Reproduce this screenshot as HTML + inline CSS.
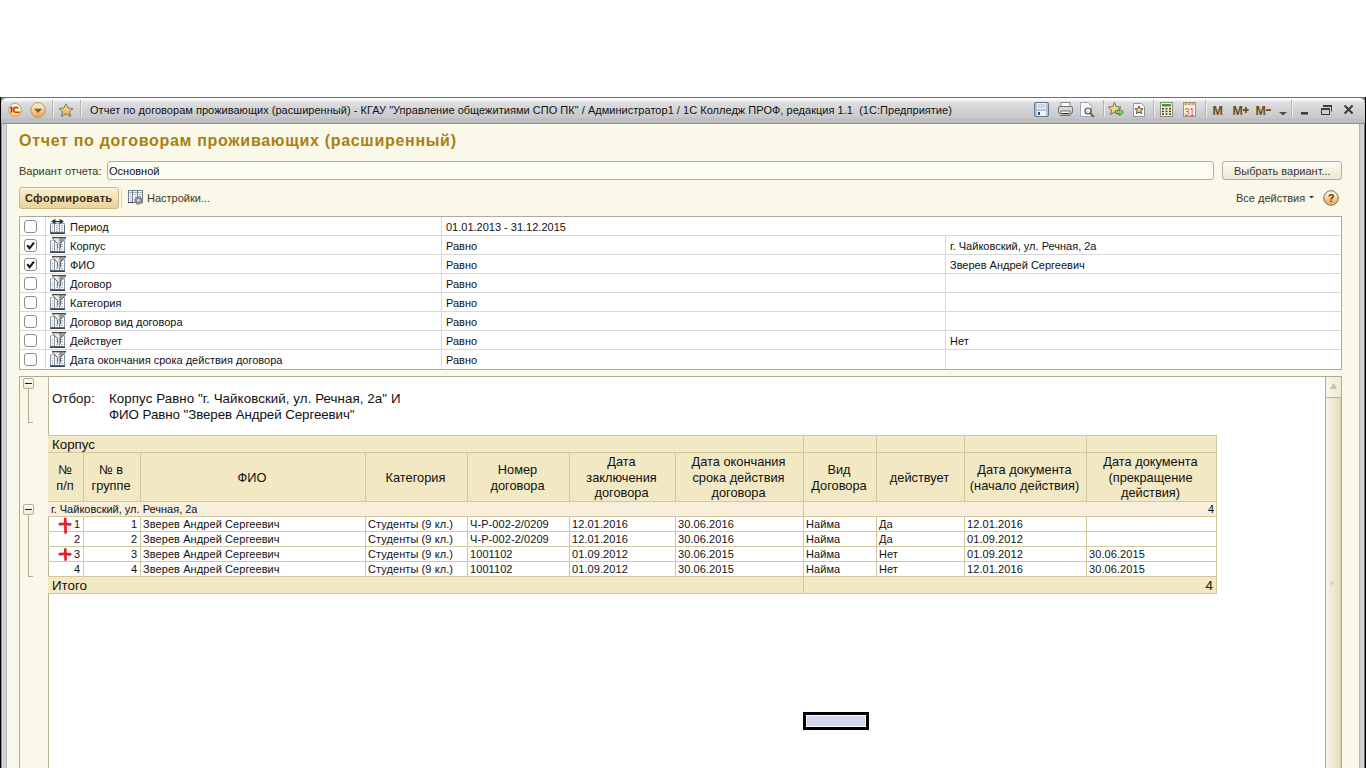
<!DOCTYPE html>
<html><head><meta charset="utf-8">
<style>
*{margin:0;padding:0;box-sizing:border-box}
html,body{width:1366px;height:768px;overflow:hidden;background:#fff;font-family:"Liberation Sans",sans-serif;font-size:11px;color:#111}
.a{position:absolute}
.t{position:absolute;white-space:nowrap;line-height:13px}
.c{position:absolute;white-space:nowrap;text-align:center}
.r{position:absolute;white-space:nowrap;text-align:right}
svg{position:absolute;overflow:visible}
</style></head><body>

<div class="a" style="left:0px;top:97px;width:1px;height:671px;background:#000"></div>
<div class="a" style="left:1365px;top:97px;width:1px;height:671px;background:#000"></div>
<div class="a" style="left:1px;top:97px;width:8px;height:8px;background:#7a7a7c"></div>
<div class="a" style="left:1357px;top:97px;width:8px;height:8px;background:#7a7a7c"></div>
<div class="a" style="left:1px;top:105px;width:6px;height:663px;background:linear-gradient(90deg,#8a8a8c 0px,#8a8a8c 1px,#dcdcdf 1px,#dcdcdf 2px,#d0d0d2 2px,#d0d0d2 5px,#bcbcbe 5px)"></div>
<div class="a" style="left:1359px;top:105px;width:6px;height:663px;background:linear-gradient(90deg,#b5b5b7 0px,#b5b5b7 1px,#d0d0d3 1px,#d0d0d3 4px,#dedee1 4px,#dedee1 5px,#6a6a6a 5px)"></div>
<div class="a" style="left:1px;top:97px;width:1364px;height:27px;border-top:1px solid #6f6f72;border-radius:6px 6px 0 0;border-bottom:1px solid #8f8f92;background:linear-gradient(#fdfdfd 0px,#fbfbfc 2px,#dfdfe1 4px,#d6d6d9 10px,#cbcbcf 17px,#c7c7cb 20px,#bdbec0 21px,#bbbcbe 25px)"></div>
<div class="a" style="left:7px;top:124px;width:1352px;height:644px;background:#faf8e8"></div>
<div class="t" style="left:90px;top:104px;color:#111;letter-spacing:0.03px">Отчет по договорам проживающих (расширенный) - КГАУ "Управление общежитиями СПО ПК" / Администратор1 / 1С Колледж ПРОФ, редакция 1.1&nbsp;&nbsp;(1С:Предприятие)</div>
<svg style="left:0;top:97px" width="100" height="27" viewBox="0 97 100 27">
 <defs>
  <linearGradient id="g1c" x1="0" y1="0" x2="0" y2="1"><stop offset="0" stop-color="#fff8dc"/><stop offset="0.55" stop-color="#fff0b8"/><stop offset="0.75" stop-color="#ffe36a"/><stop offset="1" stop-color="#ffd93c"/></linearGradient>
  <linearGradient id="gdd" x1="0" y1="0" x2="0" y2="1"><stop offset="0" stop-color="#fdf0dc"/><stop offset="0.55" stop-color="#f6c98a"/><stop offset="1" stop-color="#eaa24c"/></linearGradient>
  <linearGradient id="gst" x1="0" y1="0" x2="0" y2="1"><stop offset="0" stop-color="#fde3a0"/><stop offset="1" stop-color="#f5a83a"/></linearGradient>
 </defs>
 <circle cx="15" cy="109.8" r="6.4" fill="url(#g1c)" stroke="#b99c7c" stroke-width="1"/>
 <path d="M10.2 108.3 L11.5 107.5 L11.5 112.7" stroke="#c2330c" stroke-width="1.7" fill="none"/>
 <path d="M18.2 108.6 A2.5 2.5 0 1 0 16.2 112.3 L19.7 112.3" stroke="#c2330c" stroke-width="1.6" fill="none"/>
 <circle cx="38" cy="110" r="7.3" fill="url(#gdd)" stroke="#b78e5e" stroke-width="0.9"/>
 <path d="M34 108.8 L42 108.8 L38 113 Z" fill="#6d5c48"/>
 <rect x="52" y="100" width="1" height="17" fill="#b4b5b8"/><rect x="53" y="100" width="1" height="17" fill="#eeeef0"/>
 <path d="M66 103.8 L68.1 108 L72.9 108.6 L69.4 111.7 L70.5 116.4 L66 113.9 L61.5 116.4 L62.6 111.7 L59.1 108.6 L63.9 108 Z" fill="url(#gst)" stroke="#6f6a62" stroke-width="0.9" stroke-linejoin="round"/>
 <rect x="80" y="100" width="1" height="17" fill="#b4b5b8"/><rect x="81" y="100" width="1" height="17" fill="#eeeef0"/>
</svg>
<svg style="left:1025px;top:97px" width="341" height="27" viewBox="1025 97 341 27">
 <!-- floppy -->
 <rect x="1034.5" y="102.5" width="14" height="14" rx="1.2" fill="#b4c3d2" stroke="#63768a" stroke-width="1"/>
 <rect x="1037" y="103" width="9" height="6" fill="#e8f0f8"/>
 <rect x="1038" y="104.5" width="7" height="1" fill="#b0bcc8"/><rect x="1038" y="106.5" width="7" height="1" fill="#b0bcc8"/>
 <rect x="1037" y="111" width="9" height="5" fill="#eef2f6"/><rect x="1038" y="112" width="2" height="3" fill="#3a4a5a"/>
 <!-- printer -->
 <rect x="1061" y="102.5" width="9" height="5" fill="#fff" stroke="#8a8a8a" stroke-width="1"/>
 <rect x="1058.5" y="106.5" width="14" height="7" rx="1.5" fill="#d9d6d4" stroke="#7a7270" stroke-width="1"/>
 <rect x="1061" y="111" width="9" height="4.5" fill="#fff" stroke="#6a6a6a" stroke-width="1"/>
 <rect x="1062" y="113" width="7" height="1.3" fill="#222"/>
 <!-- preview -->
 <path d="M1080.5 102.5 L1088 102.5 L1091.5 106 L1091.5 116.5 L1080.5 116.5 Z" fill="#f6f8fb" stroke="#9aa8b8" stroke-width="1"/>
 <circle cx="1088" cy="111" r="3" fill="#dde8f5" stroke="#555" stroke-width="1.2"/>
 <path d="M1090.2 113.2 L1094 117" stroke="#8a5a2a" stroke-width="2"/>
 <rect x="1103" y="100" width="1" height="17" fill="#b4b5b8"/><rect x="1104" y="100" width="1" height="17" fill="#eeeef0"/>
 <!-- star + arrow -->
 <path d="M1114.5 102.5 L1116.3 106.6 L1120.8 107 L1117.4 110 L1118.4 114.4 L1114.5 112.1 L1110.6 114.4 L1111.6 110 L1108.2 107 L1112.7 106.6 Z" fill="#f5d48a" stroke="#6a6050" stroke-width="0.9" stroke-linejoin="round"/>
 <path d="M1115.5 110.5 L1119.5 110.5 L1119.5 108.3 L1123.8 112 L1119.5 115.7 L1119.5 113.5 L1115.5 113.5 Z" fill="#7ed05a" stroke="#3d8a2a" stroke-width="0.8"/>
 <!-- doc star -->
 <path d="M1133.5 103.5 L1141.5 103.5 L1144.5 106.5 L1144.5 116.5 L1133.5 116.5 Z" fill="#f6f8fb" stroke="#8a96a6" stroke-width="1"/>
 <path d="M1139 106 L1140.2 108.6 L1143 108.9 L1140.9 110.8 L1141.5 113.6 L1139 112.2 L1136.5 113.6 L1137.1 110.8 L1135 108.9 L1137.8 108.6 Z" fill="#f3d28a" stroke="#4a4030" stroke-width="0.9"/>
 <rect x="1153" y="100" width="1" height="17" fill="#b4b5b8"/><rect x="1154" y="100" width="1" height="17" fill="#eeeef0"/>
 <!-- calculator -->
 <rect x="1160.5" y="102.5" width="12" height="14" fill="#fbeed2" stroke="#8f8a80" stroke-width="1"/>
 <rect x="1162" y="104" width="9" height="2.5" fill="#3f9a3a"/>
 <g fill="#4a3e30"><rect x="1162" y="108" width="2" height="1.5"/><rect x="1165.5" y="108" width="2" height="1.5"/><rect x="1169" y="108" width="2" height="1.5"/><rect x="1162" y="110.7" width="2" height="1.5"/><rect x="1165.5" y="110.7" width="2" height="1.5"/><rect x="1169" y="110.7" width="2" height="1.5"/><rect x="1162" y="113.4" width="2" height="1.5"/><rect x="1165.5" y="113.4" width="2" height="1.5"/><rect x="1169" y="113.4" width="2" height="1.5"/></g>
 <!-- calendar -->
 <rect x="1183.5" y="102.5" width="12" height="14" fill="#fdf2dc" stroke="#9a948a" stroke-width="1"/>
 <rect x="1184" y="103" width="11" height="2.5" fill="#f1c988"/><rect x="1185.5" y="103.5" width="1" height="1" fill="#5a4a3a"/><rect x="1189" y="103.5" width="1" height="1" fill="#5a4a3a"/><rect x="1192.5" y="103.5" width="1" height="1" fill="#5a4a3a"/>
 <text x="1189.5" y="115.8" font-family="Liberation Sans" font-size="10.5" fill="#cc4a2a" text-anchor="middle" textLength="10" lengthAdjust="spacingAndGlyphs">31</text>
 <rect x="1205" y="100" width="1" height="17" fill="#b4b5b8"/><rect x="1206" y="100" width="1" height="17" fill="#eeeef0"/>
 <text x="1212.5" y="114.5" font-family="Liberation Sans" font-weight="bold" font-size="12.5" fill="#6e4b22">M</text>
 <text x="1232.5" y="114.5" font-family="Liberation Sans" font-weight="bold" font-size="12.5" fill="#6e4b22">M</text>
 <rect x="1243" y="109.2" width="5.6" height="1.8" fill="#6e4b22"/><rect x="1245" y="107" width="1.8" height="6" fill="#6e4b22"/>
 <text x="1255.5" y="114.5" font-family="Liberation Sans" font-weight="bold" font-size="12.5" fill="#6e4b22">M</text>
 <rect x="1266" y="109.2" width="5" height="1.8" fill="#6e4b22"/>
 <path d="M1279 112 L1287 112 L1283 115.6 Z" fill="#4a4a4a"/>
 <rect x="1291" y="100" width="1" height="17" fill="#b4b5b8"/><rect x="1292" y="100" width="1" height="17" fill="#eeeef0"/>
 <!-- minimize -->
 <rect x="1301" y="112" width="7" height="2.6" fill="#3c3c3c"/>
 <!-- restore -->
 <path d="M1323.5 105.5 L1331.5 105.5 L1331.5 111.5" fill="none" stroke="#3c3c3c" stroke-width="1"/>
 <rect x="1323" y="105" width="9" height="2" fill="#3c3c3c"/>
 <rect x="1321.5" y="108.5" width="8" height="6" fill="none" stroke="#3c3c3c" stroke-width="1"/>
 <rect x="1321" y="108" width="9" height="2" fill="#3c3c3c"/>
 <!-- close -->
 <path d="M1344.6 105.6 L1352.6 113.6 M1352.6 105.6 L1344.6 113.6" stroke="#3c3c3c" stroke-width="2.1"/>
</svg>

<div class="t" style="left:19px;top:132px;font-size:16px;font-weight:bold;color:#a97f14;line-height:18px;letter-spacing:0.7px">Отчет по договорам проживающих (расширенный)</div>
<div class="t" style="left:19px;top:165px;color:#3b3827">Вариант отчета:</div>
<div class="a" style="left:107px;top:161px;width:1107px;height:19px;border:1px solid #b3b09c;border-radius:3px;background:#fdfcf3"></div>
<div class="t" style="left:109px;top:165px;color:#111">Основной</div>
<div class="a" style="left:1222px;top:161px;width:120px;height:19px;border:1px solid #b3b09c;border-radius:3px;background:linear-gradient(#fdfcf6,#ebe8d6)"></div>
<div class="t" style="left:1234px;top:165px;color:#3b3827">Выбрать вариант...</div>
<div class="a" style="left:19px;top:187px;width:100px;height:22px;border:1px solid #cdb680;border-radius:3px;background:linear-gradient(#faefcf,#e8d39a);box-shadow:inset 0 1px 0 #fff8e4"></div>
<div class="t" style="left:25px;top:192px;font-weight:bold;color:#3a2c12;letter-spacing:0.3px">Сформировать</div>
<div class="a" style="left:121px;top:189px;width:1px;height:19px;background:#d8d3bd"></div>
<div class="t" style="left:147px;top:192px;color:#3b3827">Настройки...</div>
<div class="t" style="left:1236px;top:192px;color:#3b3827">Все действия</div>
<svg style="left:124px;top:186px" width="24" height="22" viewBox="124 186 24 22">
 <rect x="128" y="190" width="15" height="13" fill="#6f7d8c"/>
 <rect x="129" y="191" width="3" height="1.4" fill="#f2f5f8"/><rect x="133" y="191" width="4" height="1.4" fill="#f2f5f8"/><rect x="138" y="191" width="4" height="1.4" fill="#f2f5f8"/>
 <rect x="129" y="193" width="3" height="9" fill="#f4f7fa"/><rect x="133" y="193" width="4" height="9" fill="#f4f7fa"/><rect x="138" y="193" width="4" height="9" fill="#f4f7fa"/>
 <rect x="128" y="202" width="5" height="1" fill="#34414f"/>
 <g fill="#9aa6b2"><rect x="130" y="194" width="1" height="1"/><rect x="130" y="196" width="1" height="1"/><rect x="130" y="198" width="1" height="1"/><rect x="130" y="200" width="1" height="1"/><rect x="134" y="194" width="2" height="1"/><rect x="139" y="194" width="2" height="1"/></g>
 <circle cx="138.5" cy="200.3" r="3.6" fill="#8c8c8c" stroke="#7a7a7a" stroke-width="1.8" stroke-dasharray="1.2 1"/>
 <circle cx="138.5" cy="200.3" r="3" fill="#8e8e8e"/>
 <circle cx="138.5" cy="200.3" r="1.2" fill="#e8e8e8"/>
</svg>
<svg style="left:1300px;top:188px" width="40" height="20" viewBox="1300 188 40 20">
 <path d="M1309 196 L1314 196 L1311.5 198.6 Z" fill="#3b3827"/>
 <defs><linearGradient id="ghelp" x1="0" y1="0" x2="0" y2="1"><stop offset="0" stop-color="#fdf6ec"/><stop offset="0.4" stop-color="#f8dcb2"/><stop offset="0.75" stop-color="#f1b76a"/><stop offset="1" stop-color="#eeb060"/></linearGradient></defs>
 <circle cx="1331" cy="198" r="7.3" fill="url(#ghelp)" stroke="#7d6e5e" stroke-width="1"/>
 <text x="1331" y="202.2" font-family="Liberation Sans" font-size="11" font-weight="bold" fill="#5a3c22" text-anchor="middle">?</text>
</svg>

<div class="a" style="left:19px;top:216px;width:1323px;height:154px;border:1px solid #aeac98;background:#fff"></div>
<div class="a" style="left:20px;top:235px;width:1321px;height:1px;background:#d6d8da"></div>
<div class="a" style="left:20px;top:254px;width:1321px;height:1px;background:#d6d8da"></div>
<div class="a" style="left:20px;top:273px;width:1321px;height:1px;background:#d6d8da"></div>
<div class="a" style="left:20px;top:292px;width:1321px;height:1px;background:#d6d8da"></div>
<div class="a" style="left:20px;top:311px;width:1321px;height:1px;background:#d6d8da"></div>
<div class="a" style="left:20px;top:330px;width:1321px;height:1px;background:#d6d8da"></div>
<div class="a" style="left:20px;top:349px;width:1321px;height:1px;background:#d6d8da"></div>
<div class="a" style="left:45px;top:217px;width:1px;height:152px;background:#d6d8da"></div>
<div class="a" style="left:441px;top:217px;width:1px;height:152px;background:#d6d8da"></div>
<div class="a" style="left:945px;top:236px;width:1px;height:133px;background:#d6d8da"></div>
<div class="a" style="left:24px;top:220px;width:13px;height:13px;border:1px solid #8f8d7c;border-radius:3px;background:#fff"></div>
<svg style="left:45px;top:216px" width="24" height="19" viewBox="45 216 24 19">
 <rect x="50" y="223" width="15" height="11" fill="#8593a3"/>
 <rect x="50" y="223" width="15" height="1" fill="#9aa6b4"/>
 <rect x="51" y="224" width="3" height="9" fill="#f4f8fc"/>
 <rect x="55" y="224" width="4" height="9" fill="#f4f8fc"/>
 <rect x="60" y="224" width="4" height="9" fill="#f4f8fc"/>
 <rect x="50" y="232" width="15" height="1" fill="#5a6878"/><rect x="50" y="233" width="15" height="1" fill="#34414f"/>
 <rect x="50" y="226" width="1" height="7" fill="#5a6878"/><rect x="64" y="226" width="1" height="7" fill="#5a6878"/>
 <g fill="#a6b4c2"><rect x="52" y="225" width="1" height="1"/><rect x="52" y="227" width="1" height="1"/><rect x="52" y="229" width="1" height="1"/><rect x="52" y="231" width="1" height="1"/>
 <rect x="56" y="225" width="2" height="1"/><rect x="56" y="227" width="2" height="1"/><rect x="56" y="229" width="2" height="1"/><rect x="56" y="231" width="2" height="1"/>
 <rect x="61" y="225" width="2" height="1"/><rect x="61" y="227" width="2" height="1"/><rect x="61" y="229" width="2" height="1"/><rect x="61" y="231" width="2" height="1"/></g>
 <rect x="53" y="221" width="9" height="1.2" fill="#26323e"/>
 <path d="M51 221.5 L55.4 218.8 L55.4 224.2 Z M64 221.5 L59.6 218.8 L59.6 224.2 Z" fill="#26323e"/>
</svg>

<div class="t" style="left:70px;top:221px;color:#111">Период</div>
<div class="t" style="left:446px;top:221px;color:#111">01.01.2013 - 31.12.2015</div>
<div class="a" style="left:24px;top:239px;width:13px;height:13px;border:1px solid #8f8d7c;border-radius:3px;background:#fff"></div>
<svg style="left:24px;top:239px" width="13" height="13" viewBox="0 0 13 13"><path d="M3.3 6.2 L5.6 9.2 L10 3.6" fill="none" stroke="#1b1b1b" stroke-width="2.1" stroke-linejoin="miter"/></svg>
<svg style="left:45px;top:235px" width="24" height="19" viewBox="45 235 24 19">
 <defs><linearGradient id="gfun235" x1="0" y1="0" x2="1" y2="0"><stop offset="0" stop-color="#ffffff"/><stop offset="0.45" stop-color="#e6e6e6"/><stop offset="0.6" stop-color="#8e8e8e"/><stop offset="1" stop-color="#d8d8d8"/></linearGradient></defs>
 <rect x="50" y="240" width="15" height="13" fill="#8593a3"/>
 <rect x="50" y="240" width="15" height="1" fill="#b4bec8"/>
 <rect x="51" y="241" width="3" height="11" fill="#f4f8fc"/>
 <rect x="55" y="241" width="4" height="11" fill="#f4f8fc"/>
 <rect x="60" y="241" width="4" height="11" fill="#f4f8fc"/>
 <rect x="50" y="251" width="15" height="1" fill="#5a6878"/><rect x="50" y="252" width="15" height="1" fill="#34414f"/>
 <g fill="#a6b4c2"><rect x="52" y="244" width="1" height="1"/><rect x="52" y="246" width="1" height="1"/><rect x="52" y="248" width="1" height="1"/><rect x="52" y="250" width="1" height="1"/>
 <rect x="56" y="249" width="2" height="1"/><rect x="61" y="244" width="2" height="1"/><rect x="61" y="246" width="2" height="1"/><rect x="61" y="249" width="2" height="1"/></g>
 <path d="M52 237 L66 237 L60.6 243.5 L60.4 248.6 L57.4 248.6 L57.2 243.5 Z" fill="url(#gfun235)"/>
 <path d="M52 237.6 L66 237.6" stroke="#4a4a4a" stroke-width="1.3"/>
 <path d="M52.3 237.8 L57.4 243.6 L57.4 248.6 M65.7 237.8 L60.4 243.6 L60.4 248.6" fill="none" stroke="#555" stroke-width="0.9"/>
</svg>

<div class="t" style="left:70px;top:240px;color:#111">Корпус</div>
<div class="t" style="left:446px;top:240px;color:#111">Равно</div>
<div class="t" style="left:950px;top:240px;color:#111">г. Чайковский, ул. Речная, 2а</div>
<div class="a" style="left:24px;top:258px;width:13px;height:13px;border:1px solid #8f8d7c;border-radius:3px;background:#fff"></div>
<svg style="left:24px;top:258px" width="13" height="13" viewBox="0 0 13 13"><path d="M3.3 6.2 L5.6 9.2 L10 3.6" fill="none" stroke="#1b1b1b" stroke-width="2.1" stroke-linejoin="miter"/></svg>
<svg style="left:45px;top:254px" width="24" height="19" viewBox="45 235 24 19">
 <defs><linearGradient id="gfun254" x1="0" y1="0" x2="1" y2="0"><stop offset="0" stop-color="#ffffff"/><stop offset="0.45" stop-color="#e6e6e6"/><stop offset="0.6" stop-color="#8e8e8e"/><stop offset="1" stop-color="#d8d8d8"/></linearGradient></defs>
 <rect x="50" y="240" width="15" height="13" fill="#8593a3"/>
 <rect x="50" y="240" width="15" height="1" fill="#b4bec8"/>
 <rect x="51" y="241" width="3" height="11" fill="#f4f8fc"/>
 <rect x="55" y="241" width="4" height="11" fill="#f4f8fc"/>
 <rect x="60" y="241" width="4" height="11" fill="#f4f8fc"/>
 <rect x="50" y="251" width="15" height="1" fill="#5a6878"/><rect x="50" y="252" width="15" height="1" fill="#34414f"/>
 <g fill="#a6b4c2"><rect x="52" y="244" width="1" height="1"/><rect x="52" y="246" width="1" height="1"/><rect x="52" y="248" width="1" height="1"/><rect x="52" y="250" width="1" height="1"/>
 <rect x="56" y="249" width="2" height="1"/><rect x="61" y="244" width="2" height="1"/><rect x="61" y="246" width="2" height="1"/><rect x="61" y="249" width="2" height="1"/></g>
 <path d="M52 237 L66 237 L60.6 243.5 L60.4 248.6 L57.4 248.6 L57.2 243.5 Z" fill="url(#gfun254)"/>
 <path d="M52 237.6 L66 237.6" stroke="#4a4a4a" stroke-width="1.3"/>
 <path d="M52.3 237.8 L57.4 243.6 L57.4 248.6 M65.7 237.8 L60.4 243.6 L60.4 248.6" fill="none" stroke="#555" stroke-width="0.9"/>
</svg>

<div class="t" style="left:70px;top:259px;color:#111">ФИО</div>
<div class="t" style="left:446px;top:259px;color:#111">Равно</div>
<div class="t" style="left:950px;top:259px;color:#111">Зверев Андрей Сергеевич</div>
<div class="a" style="left:24px;top:277px;width:13px;height:13px;border:1px solid #8f8d7c;border-radius:3px;background:#fff"></div>
<svg style="left:45px;top:273px" width="24" height="19" viewBox="45 235 24 19">
 <defs><linearGradient id="gfun273" x1="0" y1="0" x2="1" y2="0"><stop offset="0" stop-color="#ffffff"/><stop offset="0.45" stop-color="#e6e6e6"/><stop offset="0.6" stop-color="#8e8e8e"/><stop offset="1" stop-color="#d8d8d8"/></linearGradient></defs>
 <rect x="50" y="240" width="15" height="13" fill="#8593a3"/>
 <rect x="50" y="240" width="15" height="1" fill="#b4bec8"/>
 <rect x="51" y="241" width="3" height="11" fill="#f4f8fc"/>
 <rect x="55" y="241" width="4" height="11" fill="#f4f8fc"/>
 <rect x="60" y="241" width="4" height="11" fill="#f4f8fc"/>
 <rect x="50" y="251" width="15" height="1" fill="#5a6878"/><rect x="50" y="252" width="15" height="1" fill="#34414f"/>
 <g fill="#a6b4c2"><rect x="52" y="244" width="1" height="1"/><rect x="52" y="246" width="1" height="1"/><rect x="52" y="248" width="1" height="1"/><rect x="52" y="250" width="1" height="1"/>
 <rect x="56" y="249" width="2" height="1"/><rect x="61" y="244" width="2" height="1"/><rect x="61" y="246" width="2" height="1"/><rect x="61" y="249" width="2" height="1"/></g>
 <path d="M52 237 L66 237 L60.6 243.5 L60.4 248.6 L57.4 248.6 L57.2 243.5 Z" fill="url(#gfun273)"/>
 <path d="M52 237.6 L66 237.6" stroke="#4a4a4a" stroke-width="1.3"/>
 <path d="M52.3 237.8 L57.4 243.6 L57.4 248.6 M65.7 237.8 L60.4 243.6 L60.4 248.6" fill="none" stroke="#555" stroke-width="0.9"/>
</svg>

<div class="t" style="left:70px;top:278px;color:#111">Договор</div>
<div class="t" style="left:446px;top:278px;color:#111">Равно</div>
<div class="a" style="left:24px;top:296px;width:13px;height:13px;border:1px solid #8f8d7c;border-radius:3px;background:#fff"></div>
<svg style="left:45px;top:292px" width="24" height="19" viewBox="45 235 24 19">
 <defs><linearGradient id="gfun292" x1="0" y1="0" x2="1" y2="0"><stop offset="0" stop-color="#ffffff"/><stop offset="0.45" stop-color="#e6e6e6"/><stop offset="0.6" stop-color="#8e8e8e"/><stop offset="1" stop-color="#d8d8d8"/></linearGradient></defs>
 <rect x="50" y="240" width="15" height="13" fill="#8593a3"/>
 <rect x="50" y="240" width="15" height="1" fill="#b4bec8"/>
 <rect x="51" y="241" width="3" height="11" fill="#f4f8fc"/>
 <rect x="55" y="241" width="4" height="11" fill="#f4f8fc"/>
 <rect x="60" y="241" width="4" height="11" fill="#f4f8fc"/>
 <rect x="50" y="251" width="15" height="1" fill="#5a6878"/><rect x="50" y="252" width="15" height="1" fill="#34414f"/>
 <g fill="#a6b4c2"><rect x="52" y="244" width="1" height="1"/><rect x="52" y="246" width="1" height="1"/><rect x="52" y="248" width="1" height="1"/><rect x="52" y="250" width="1" height="1"/>
 <rect x="56" y="249" width="2" height="1"/><rect x="61" y="244" width="2" height="1"/><rect x="61" y="246" width="2" height="1"/><rect x="61" y="249" width="2" height="1"/></g>
 <path d="M52 237 L66 237 L60.6 243.5 L60.4 248.6 L57.4 248.6 L57.2 243.5 Z" fill="url(#gfun292)"/>
 <path d="M52 237.6 L66 237.6" stroke="#4a4a4a" stroke-width="1.3"/>
 <path d="M52.3 237.8 L57.4 243.6 L57.4 248.6 M65.7 237.8 L60.4 243.6 L60.4 248.6" fill="none" stroke="#555" stroke-width="0.9"/>
</svg>

<div class="t" style="left:70px;top:297px;color:#111">Категория</div>
<div class="t" style="left:446px;top:297px;color:#111">Равно</div>
<div class="a" style="left:24px;top:315px;width:13px;height:13px;border:1px solid #8f8d7c;border-radius:3px;background:#fff"></div>
<svg style="left:45px;top:311px" width="24" height="19" viewBox="45 235 24 19">
 <defs><linearGradient id="gfun311" x1="0" y1="0" x2="1" y2="0"><stop offset="0" stop-color="#ffffff"/><stop offset="0.45" stop-color="#e6e6e6"/><stop offset="0.6" stop-color="#8e8e8e"/><stop offset="1" stop-color="#d8d8d8"/></linearGradient></defs>
 <rect x="50" y="240" width="15" height="13" fill="#8593a3"/>
 <rect x="50" y="240" width="15" height="1" fill="#b4bec8"/>
 <rect x="51" y="241" width="3" height="11" fill="#f4f8fc"/>
 <rect x="55" y="241" width="4" height="11" fill="#f4f8fc"/>
 <rect x="60" y="241" width="4" height="11" fill="#f4f8fc"/>
 <rect x="50" y="251" width="15" height="1" fill="#5a6878"/><rect x="50" y="252" width="15" height="1" fill="#34414f"/>
 <g fill="#a6b4c2"><rect x="52" y="244" width="1" height="1"/><rect x="52" y="246" width="1" height="1"/><rect x="52" y="248" width="1" height="1"/><rect x="52" y="250" width="1" height="1"/>
 <rect x="56" y="249" width="2" height="1"/><rect x="61" y="244" width="2" height="1"/><rect x="61" y="246" width="2" height="1"/><rect x="61" y="249" width="2" height="1"/></g>
 <path d="M52 237 L66 237 L60.6 243.5 L60.4 248.6 L57.4 248.6 L57.2 243.5 Z" fill="url(#gfun311)"/>
 <path d="M52 237.6 L66 237.6" stroke="#4a4a4a" stroke-width="1.3"/>
 <path d="M52.3 237.8 L57.4 243.6 L57.4 248.6 M65.7 237.8 L60.4 243.6 L60.4 248.6" fill="none" stroke="#555" stroke-width="0.9"/>
</svg>

<div class="t" style="left:70px;top:316px;color:#111">Договор вид договора</div>
<div class="t" style="left:446px;top:316px;color:#111">Равно</div>
<div class="a" style="left:24px;top:334px;width:13px;height:13px;border:1px solid #8f8d7c;border-radius:3px;background:#fff"></div>
<svg style="left:45px;top:330px" width="24" height="19" viewBox="45 235 24 19">
 <defs><linearGradient id="gfun330" x1="0" y1="0" x2="1" y2="0"><stop offset="0" stop-color="#ffffff"/><stop offset="0.45" stop-color="#e6e6e6"/><stop offset="0.6" stop-color="#8e8e8e"/><stop offset="1" stop-color="#d8d8d8"/></linearGradient></defs>
 <rect x="50" y="240" width="15" height="13" fill="#8593a3"/>
 <rect x="50" y="240" width="15" height="1" fill="#b4bec8"/>
 <rect x="51" y="241" width="3" height="11" fill="#f4f8fc"/>
 <rect x="55" y="241" width="4" height="11" fill="#f4f8fc"/>
 <rect x="60" y="241" width="4" height="11" fill="#f4f8fc"/>
 <rect x="50" y="251" width="15" height="1" fill="#5a6878"/><rect x="50" y="252" width="15" height="1" fill="#34414f"/>
 <g fill="#a6b4c2"><rect x="52" y="244" width="1" height="1"/><rect x="52" y="246" width="1" height="1"/><rect x="52" y="248" width="1" height="1"/><rect x="52" y="250" width="1" height="1"/>
 <rect x="56" y="249" width="2" height="1"/><rect x="61" y="244" width="2" height="1"/><rect x="61" y="246" width="2" height="1"/><rect x="61" y="249" width="2" height="1"/></g>
 <path d="M52 237 L66 237 L60.6 243.5 L60.4 248.6 L57.4 248.6 L57.2 243.5 Z" fill="url(#gfun330)"/>
 <path d="M52 237.6 L66 237.6" stroke="#4a4a4a" stroke-width="1.3"/>
 <path d="M52.3 237.8 L57.4 243.6 L57.4 248.6 M65.7 237.8 L60.4 243.6 L60.4 248.6" fill="none" stroke="#555" stroke-width="0.9"/>
</svg>

<div class="t" style="left:70px;top:335px;color:#111">Действует</div>
<div class="t" style="left:446px;top:335px;color:#111">Равно</div>
<div class="t" style="left:950px;top:335px;color:#111">Нет</div>
<div class="a" style="left:24px;top:353px;width:13px;height:13px;border:1px solid #8f8d7c;border-radius:3px;background:#fff"></div>
<svg style="left:45px;top:349px" width="24" height="19" viewBox="45 235 24 19">
 <defs><linearGradient id="gfun349" x1="0" y1="0" x2="1" y2="0"><stop offset="0" stop-color="#ffffff"/><stop offset="0.45" stop-color="#e6e6e6"/><stop offset="0.6" stop-color="#8e8e8e"/><stop offset="1" stop-color="#d8d8d8"/></linearGradient></defs>
 <rect x="50" y="240" width="15" height="13" fill="#8593a3"/>
 <rect x="50" y="240" width="15" height="1" fill="#b4bec8"/>
 <rect x="51" y="241" width="3" height="11" fill="#f4f8fc"/>
 <rect x="55" y="241" width="4" height="11" fill="#f4f8fc"/>
 <rect x="60" y="241" width="4" height="11" fill="#f4f8fc"/>
 <rect x="50" y="251" width="15" height="1" fill="#5a6878"/><rect x="50" y="252" width="15" height="1" fill="#34414f"/>
 <g fill="#a6b4c2"><rect x="52" y="244" width="1" height="1"/><rect x="52" y="246" width="1" height="1"/><rect x="52" y="248" width="1" height="1"/><rect x="52" y="250" width="1" height="1"/>
 <rect x="56" y="249" width="2" height="1"/><rect x="61" y="244" width="2" height="1"/><rect x="61" y="246" width="2" height="1"/><rect x="61" y="249" width="2" height="1"/></g>
 <path d="M52 237 L66 237 L60.6 243.5 L60.4 248.6 L57.4 248.6 L57.2 243.5 Z" fill="url(#gfun349)"/>
 <path d="M52 237.6 L66 237.6" stroke="#4a4a4a" stroke-width="1.3"/>
 <path d="M52.3 237.8 L57.4 243.6 L57.4 248.6 M65.7 237.8 L60.4 243.6 L60.4 248.6" fill="none" stroke="#555" stroke-width="0.9"/>
</svg>

<div class="t" style="left:70px;top:354px;color:#111">Дата окончания срока действия договора</div>
<div class="t" style="left:446px;top:354px;color:#111">Равно</div>
<div class="a" style="left:19px;top:376px;width:1323px;height:392px;border:1px solid #aeac98;border-bottom:none;background:#fff"></div>
<div class="a" style="left:20px;top:377px;width:28px;height:391px;background:#faf8e8"></div>
<div class="a" style="left:48px;top:377px;width:1px;height:391px;background:#b9b59b"></div>
<div class="a" style="left:1325px;top:377px;width:16px;height:391px;border-left:1px solid #aeac98;background:linear-gradient(90deg,#f7f3e6,#efe9cf 50%,#e6dfbd 90%,#c9c29e)"></div>
<div class="a" style="left:1326px;top:377px;width:15px;height:21px;border-bottom:1px solid #b9b59c;background:linear-gradient(90deg,#f9f6ea,#efe9d0)"></div>
<svg style="left:1326px;top:377px" width="15" height="20"><path d="M4 12 L7.5 6 L11 12 Z" fill="#c5c2af"/></svg>
<svg style="left:1329px;top:580px" width="8" height="8"><path d="M2 5 Q2 2 5 2" fill="none" stroke="#cfcab3" stroke-width="1.6"/></svg>
<div class="a" style="left:23px;top:378px;width:11px;height:11px;border:1px solid #b2ae92;border-radius:2px;background:linear-gradient(#fdfcf5,#efebd8)"></div>
<div class="a" style="left:25px;top:383px;width:7px;height:1px;background:#222"></div>
<div class="a" style="left:28px;top:389px;width:1px;height:34px;background:#b2ae92"></div>
<div class="a" style="left:28px;top:422px;width:5px;height:1px;background:#b2ae92"></div>
<div class="a" style="left:23px;top:504px;width:11px;height:11px;border:1px solid #b2ae92;border-radius:2px;background:linear-gradient(#fdfcf5,#efebd8)"></div>
<div class="a" style="left:25px;top:509px;width:7px;height:1px;background:#222"></div>
<div class="a" style="left:28px;top:515px;width:1px;height:62px;background:#b2ae92"></div>
<div class="a" style="left:28px;top:576px;width:5px;height:1px;background:#b2ae92"></div>
<div class="t" style="left:52px;top:391px;font-size:13.33px;line-height:16px;color:#111">Отбор:</div>
<div class="t" style="left:109px;top:391px;font-size:13.33px;line-height:16px;color:#111;letter-spacing:0.07px">Корпус Равно "г. Чайковский, ул. Речная, 2а" И</div>
<div class="t" style="left:109px;top:407px;font-size:13.33px;line-height:16px;color:#111;letter-spacing:-0.07px">ФИО Равно "Зверев Андрей Сергеевич"</div>
<div class="a" style="left:48px;top:435px;width:1168px;height:17px;background:#f2e8c4"></div>
<div class="a" style="left:48px;top:452px;width:1168px;height:49px;background:#f2e8c4"></div>
<div class="a" style="left:48px;top:501px;width:1168px;height:15px;background:#f7efdb"></div>
<div class="a" style="left:48px;top:576px;width:1168px;height:17px;background:#f2e8c4"></div>
<div class="a" style="left:48px;top:435px;width:1169px;height:1px;background:#d1c89c"></div>
<div class="a" style="left:48px;top:452px;width:1169px;height:1px;background:#d1c89c"></div>
<div class="a" style="left:48px;top:501px;width:1169px;height:1px;background:#d1c89c"></div>
<div class="a" style="left:48px;top:516px;width:1169px;height:1px;background:#d1c89c"></div>
<div class="a" style="left:48px;top:531px;width:1169px;height:1px;background:#d1c89c"></div>
<div class="a" style="left:48px;top:546px;width:1169px;height:1px;background:#d1c89c"></div>
<div class="a" style="left:48px;top:561px;width:1169px;height:1px;background:#d1c89c"></div>
<div class="a" style="left:48px;top:576px;width:1169px;height:1px;background:#d1c89c"></div>
<div class="a" style="left:48px;top:593px;width:1169px;height:1px;background:#d1c89c"></div>
<div class="a" style="left:803px;top:435px;width:1px;height:159px;background:#d1c89c"></div>
<div class="a" style="left:1216px;top:435px;width:1px;height:159px;background:#d1c89c"></div>
<div class="a" style="left:876px;top:435px;width:1px;height:66px;background:#d1c89c"></div>
<div class="a" style="left:876px;top:516px;width:1px;height:60px;background:#d1c89c"></div>
<div class="a" style="left:964px;top:435px;width:1px;height:66px;background:#d1c89c"></div>
<div class="a" style="left:964px;top:516px;width:1px;height:60px;background:#d1c89c"></div>
<div class="a" style="left:1086px;top:435px;width:1px;height:66px;background:#d1c89c"></div>
<div class="a" style="left:1086px;top:516px;width:1px;height:60px;background:#d1c89c"></div>
<div class="a" style="left:83px;top:452px;width:1px;height:49px;background:#d1c89c"></div>
<div class="a" style="left:83px;top:516px;width:1px;height:60px;background:#d1c89c"></div>
<div class="a" style="left:140px;top:452px;width:1px;height:49px;background:#d1c89c"></div>
<div class="a" style="left:140px;top:516px;width:1px;height:60px;background:#d1c89c"></div>
<div class="a" style="left:365px;top:452px;width:1px;height:49px;background:#d1c89c"></div>
<div class="a" style="left:365px;top:516px;width:1px;height:60px;background:#d1c89c"></div>
<div class="a" style="left:467px;top:452px;width:1px;height:49px;background:#d1c89c"></div>
<div class="a" style="left:467px;top:516px;width:1px;height:60px;background:#d1c89c"></div>
<div class="a" style="left:569px;top:452px;width:1px;height:49px;background:#d1c89c"></div>
<div class="a" style="left:569px;top:516px;width:1px;height:60px;background:#d1c89c"></div>
<div class="a" style="left:675px;top:452px;width:1px;height:49px;background:#d1c89c"></div>
<div class="a" style="left:675px;top:516px;width:1px;height:60px;background:#d1c89c"></div>
<div class="t" style="left:52px;top:437px;font-size:13.33px;line-height:15.6px;color:#111">Корпус</div>
<div class="a" style="left:49px;top:453px;width:34px;height:48px;display:flex;align-items:center;justify-content:center;text-align:center;padding:1px 3px 0 1px;white-space:nowrap;font-size:12.8px;line-height:15.8px;color:#111"><div>№<br>п/п</div></div>
<div class="a" style="left:84px;top:453px;width:56px;height:48px;display:flex;align-items:center;justify-content:center;text-align:center;padding:1px 3px 0 1px;white-space:nowrap;font-size:12.8px;line-height:15.8px;color:#111"><div>№ в<br>группе</div></div>
<div class="a" style="left:141px;top:453px;width:224px;height:48px;display:flex;align-items:center;justify-content:center;text-align:center;padding:1px 3px 0 1px;white-space:nowrap;font-size:12.8px;line-height:15.8px;color:#111"><div>ФИО</div></div>
<div class="a" style="left:366px;top:453px;width:101px;height:48px;display:flex;align-items:center;justify-content:center;text-align:center;padding:1px 3px 0 1px;white-space:nowrap;font-size:12.8px;line-height:15.8px;color:#111"><div>Категория</div></div>
<div class="a" style="left:468px;top:453px;width:101px;height:48px;display:flex;align-items:center;justify-content:center;text-align:center;padding:1px 3px 0 1px;white-space:nowrap;font-size:12.8px;line-height:15.8px;color:#111"><div>Номер<br>договора</div></div>
<div class="a" style="left:570px;top:453px;width:105px;height:48px;display:flex;align-items:center;justify-content:center;text-align:center;padding:1px 3px 0 1px;white-space:nowrap;font-size:12.8px;line-height:15.8px;color:#111"><div>Дата<br>заключения<br>договора</div></div>
<div class="a" style="left:676px;top:453px;width:127px;height:48px;display:flex;align-items:center;justify-content:center;text-align:center;padding:1px 3px 0 1px;white-space:nowrap;font-size:12.8px;line-height:15.8px;color:#111"><div>Дата окончания<br>срока действия<br>договора</div></div>
<div class="a" style="left:804px;top:453px;width:72px;height:48px;display:flex;align-items:center;justify-content:center;text-align:center;padding:1px 3px 0 1px;white-space:nowrap;font-size:12.8px;line-height:15.8px;color:#111"><div>Вид<br>Договора</div></div>
<div class="a" style="left:877px;top:453px;width:87px;height:48px;display:flex;align-items:center;justify-content:center;text-align:center;padding:1px 3px 0 1px;white-space:nowrap;font-size:12.8px;line-height:15.8px;color:#111"><div>действует</div></div>
<div class="a" style="left:965px;top:453px;width:121px;height:48px;display:flex;align-items:center;justify-content:center;text-align:center;padding:1px 3px 0 1px;white-space:nowrap;font-size:12.8px;line-height:15.8px;color:#111"><div>Дата документа<br>(начало действия)</div></div>
<div class="a" style="left:1087px;top:453px;width:129px;height:48px;display:flex;align-items:center;justify-content:center;text-align:center;padding:1px 3px 0 1px;white-space:nowrap;font-size:12.8px;line-height:15.8px;color:#111"><div>Дата документа<br>(прекращение<br>действия)</div></div>
<div class="t" style="left:51px;top:503px;color:#111">г. Чайковский, ул. Речная, 2а</div>
<div class="r" style="left:1100px;width:114px;top:503px;line-height:13px;color:#111">4</div>
<div class="r" style="left:49px;width:31px;top:518px;line-height:13px;color:#111">1</div>
<div class="r" style="left:84px;width:53px;top:518px;line-height:13px;color:#111">1</div>
<div class="t" style="left:143px;top:518px;color:#111;letter-spacing:0.08px">Зверев Андрей Сергеевич</div>
<div class="t" style="left:368px;top:518px;color:#111;letter-spacing:0.08px">Студенты (9 кл.)</div>
<div class="t" style="left:470px;top:518px;color:#111;letter-spacing:0.08px">Ч-Р-002-2/0209</div>
<div class="t" style="left:572px;top:518px;color:#111;letter-spacing:0.08px">12.01.2016</div>
<div class="t" style="left:678px;top:518px;color:#111;letter-spacing:0.08px">30.06.2016</div>
<div class="t" style="left:806px;top:518px;color:#111;letter-spacing:0.08px">Найма</div>
<div class="t" style="left:879px;top:518px;color:#111;letter-spacing:0.08px">Да</div>
<div class="t" style="left:967px;top:518px;color:#111;letter-spacing:0.08px">12.01.2016</div>
<svg style="left:57px;top:516px" width="18" height="20" viewBox="0 0 18 20"><path d="M2.8 8.2 Q8 7.6 13.2 8.4" stroke="#e1202c" stroke-width="2.8" fill="none" stroke-linecap="round"/><path d="M8.2 2.9 Q8.5 10 8.6 16.6" stroke="#e1202c" stroke-width="2.7" fill="none" stroke-linecap="round"/></svg>
<div class="r" style="left:49px;width:31px;top:533px;line-height:13px;color:#111">2</div>
<div class="r" style="left:84px;width:53px;top:533px;line-height:13px;color:#111">2</div>
<div class="t" style="left:143px;top:533px;color:#111;letter-spacing:0.08px">Зверев Андрей Сергеевич</div>
<div class="t" style="left:368px;top:533px;color:#111;letter-spacing:0.08px">Студенты (9 кл.)</div>
<div class="t" style="left:470px;top:533px;color:#111;letter-spacing:0.08px">Ч-Р-002-2/0209</div>
<div class="t" style="left:572px;top:533px;color:#111;letter-spacing:0.08px">12.01.2016</div>
<div class="t" style="left:678px;top:533px;color:#111;letter-spacing:0.08px">30.06.2016</div>
<div class="t" style="left:806px;top:533px;color:#111;letter-spacing:0.08px">Найма</div>
<div class="t" style="left:879px;top:533px;color:#111;letter-spacing:0.08px">Да</div>
<div class="t" style="left:967px;top:533px;color:#111;letter-spacing:0.08px">01.09.2012</div>
<div class="r" style="left:49px;width:31px;top:548px;line-height:13px;color:#111">3</div>
<div class="r" style="left:84px;width:53px;top:548px;line-height:13px;color:#111">3</div>
<div class="t" style="left:143px;top:548px;color:#111;letter-spacing:0.08px">Зверев Андрей Сергеевич</div>
<div class="t" style="left:368px;top:548px;color:#111;letter-spacing:0.08px">Студенты (9 кл.)</div>
<div class="t" style="left:470px;top:548px;color:#111;letter-spacing:0.08px">1001102</div>
<div class="t" style="left:572px;top:548px;color:#111;letter-spacing:0.08px">01.09.2012</div>
<div class="t" style="left:678px;top:548px;color:#111;letter-spacing:0.08px">30.06.2015</div>
<div class="t" style="left:806px;top:548px;color:#111;letter-spacing:0.08px">Найма</div>
<div class="t" style="left:879px;top:548px;color:#111;letter-spacing:0.08px">Нет</div>
<div class="t" style="left:967px;top:548px;color:#111;letter-spacing:0.08px">01.09.2012</div>
<div class="t" style="left:1089px;top:548px;color:#111;letter-spacing:0.08px">30.06.2015</div>
<svg style="left:57px;top:546px" width="18" height="20" viewBox="0 0 18 20"><path d="M2.8 8.2 Q8 7.6 13.2 8.4" stroke="#e1202c" stroke-width="2.8" fill="none" stroke-linecap="round"/><path d="M8.2 3.4 Q8.5 10 8.6 13.6" stroke="#e1202c" stroke-width="2.7" fill="none" stroke-linecap="round"/></svg>
<div class="r" style="left:49px;width:31px;top:563px;line-height:13px;color:#111">4</div>
<div class="r" style="left:84px;width:53px;top:563px;line-height:13px;color:#111">4</div>
<div class="t" style="left:143px;top:563px;color:#111;letter-spacing:0.08px">Зверев Андрей Сергеевич</div>
<div class="t" style="left:368px;top:563px;color:#111;letter-spacing:0.08px">Студенты (9 кл.)</div>
<div class="t" style="left:470px;top:563px;color:#111;letter-spacing:0.08px">1001102</div>
<div class="t" style="left:572px;top:563px;color:#111;letter-spacing:0.08px">01.09.2012</div>
<div class="t" style="left:678px;top:563px;color:#111;letter-spacing:0.08px">30.06.2015</div>
<div class="t" style="left:806px;top:563px;color:#111;letter-spacing:0.08px">Найма</div>
<div class="t" style="left:879px;top:563px;color:#111;letter-spacing:0.08px">Нет</div>
<div class="t" style="left:967px;top:563px;color:#111;letter-spacing:0.08px">12.01.2016</div>
<div class="t" style="left:1089px;top:563px;color:#111;letter-spacing:0.08px">30.06.2015</div>
<div class="t" style="left:52px;top:578px;font-size:13.33px;line-height:15.6px;color:#111">Итого</div>
<div class="r" style="left:1100px;width:113px;top:578px;font-size:13.33px;line-height:15.6px;color:#111">4</div>
<div class="a" style="left:803px;top:712px;width:66px;height:18px;border:3px solid #000;background:#fff"></div>
<div class="a" style="left:807px;top:716px;width:58px;height:10px;background:#d4d8ed"></div>
</body></html>
